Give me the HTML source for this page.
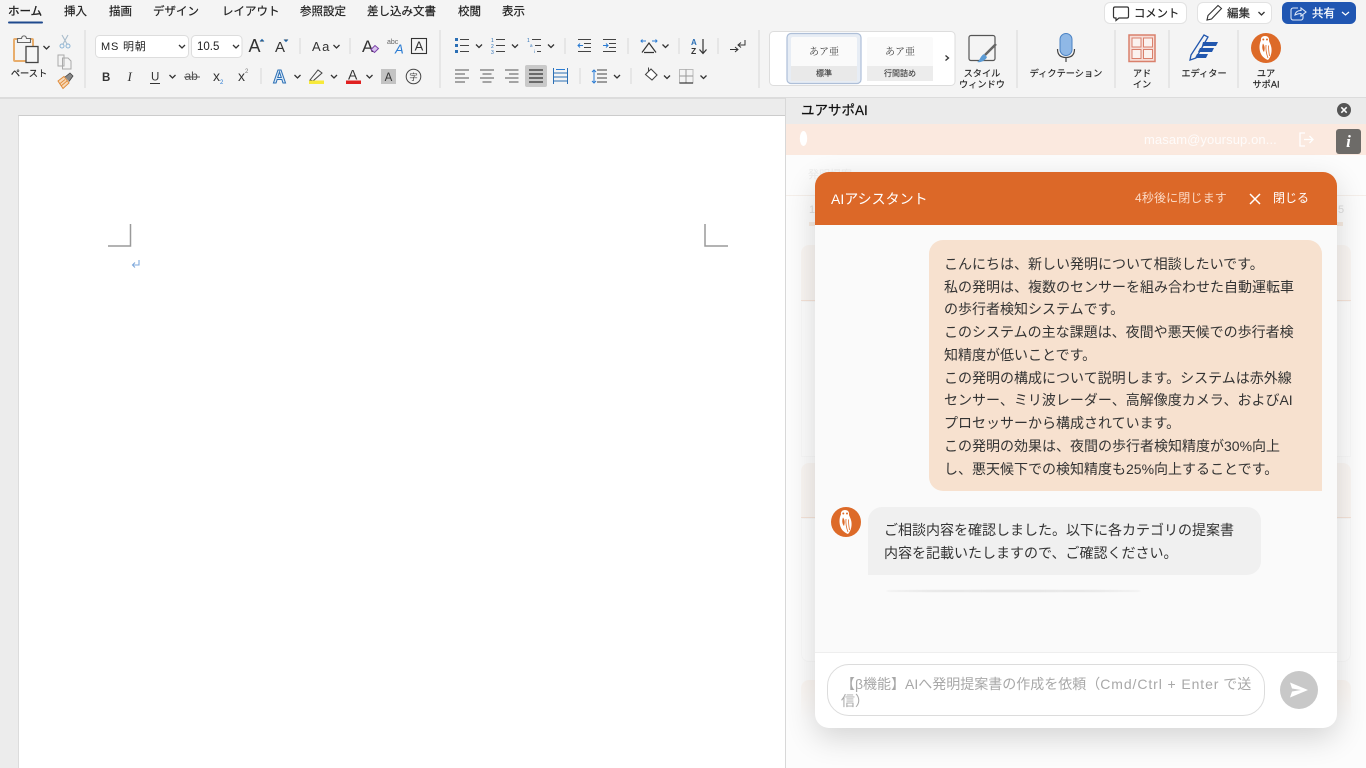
<!DOCTYPE html>
<html lang="ja"><head><meta charset="utf-8"><title>Word</title>
<style>
html,body{margin:0;padding:0;width:1366px;height:768px;overflow:hidden;background:#ececec;font-family:"Liberation Sans","Noto Sans CJK JP",sans-serif;color:#222}
.a{position:absolute}
svg text{font-family:"Liberation Sans","Noto Sans CJK JP",sans-serif}
.t{white-space:nowrap}
.line{position:absolute;white-space:nowrap;font-size:14px;line-height:20px;color:#333}
</style></head><body>
<div class="a" style="left:0;top:0;width:1366px;height:97px;background:#f4f4f4;border-bottom:2px solid #dcdcdc"></div>
<!-- document -->
<div class="a" style="left:18px;top:115px;width:768px;height:653px;background:#fff;border-top:1.5px solid #ccc;border-left:1px solid #dcdcdc;box-sizing:border-box"></div>
<svg class="a" style="left:0;top:0" width="1366" height="768" viewBox="0 0 1366 768" fill="none">
<defs>
<path id="c" d="M-3 -1.5L0 1.5L3 -1.5" stroke="#333" stroke-width="1.3" fill="none"/>
<g id="owl">
<path d="M-1 -12C-4 -12 -5.500 -10 -5 -7.500C-7 -4 -7 2 -5 6C-3.500 9 -.5 11 2 12C5 9 6.500 3 5 -2C4.500 -4 3.500 -5.500 3 -7C3.500 -10 2 -12 -1 -12Z" fill="#fff"/>
<path d="M-3 -4.500C-4.500 -1 -3.500 2.500 -2 4C-1 1 -1 -2 -3 -4.500Z" fill="#dd6a28"/>
<path d="M0 -3C-.5 2 .5 6 2 10M2.500 -2.500C2.500 2 3 5 3.500 8" stroke="#dd6a28" stroke-width=".8"/>
<circle cx="-2.700" cy="-8.500" r="1" fill="#dd6a28"/><circle cx="1" cy="-8.500" r="1" fill="#dd6a28"/>
</g>
</defs>
<!-- doc crop marks -->
<path d="M108 246H130.500V224" stroke="#9a9a9a" stroke-width="1.500"/>
<path d="M705 224V246H728" stroke="#9a9a9a" stroke-width="1.500"/>
<path d="M139 260V265H132.500M135 262.500L132.500 265L135 267.500" stroke="#7fa9dc" stroke-width="1.100"/>

<!-- tabs -->
<g font-size="11.500" fill="#222" stroke="#222" stroke-width=".2">
<text x="8" y="15" stroke-width=".35">ホーム</text><text x="64" y="15">挿入</text><text x="109" y="15">描画</text><text x="153" y="15">デザイン</text><text x="222" y="15">レイアウト</text><text x="300" y="15">参照設定</text><text x="367" y="15">差し込み文書</text><text x="458" y="15">校閲</text><text x="502" y="15">表示</text>
</g>
<rect x="8" y="21.500" width="35" height="2" rx="1" fill="#1f4a8e"/>

<!-- separators -->
<g stroke="#dcdcdc" stroke-width="1.200">
<path d="M85 30V88M440 30V88M759 30V88M1017 30V88M1115 30V88M1169 30V88M1238 30V88"/>
<path d="M300 38V54M350 38V54M261 68V84M565 38V54M628 38V54M679 38V54M718 38V54M580 68V84M631 68V84"/>
</g>

<!-- paste -->
<rect x="14" y="39" width="19" height="22" rx="1" stroke="#e8ad6c" stroke-width="2"/>
<path d="M17.500 42.500V38.500H21.500C22 35 26 35 26.500 38.500H30.500V42.500Z" fill="#f4f4f4" stroke="#666" stroke-width="1.100"/>
<rect x="26" y="46.500" width="12" height="16" fill="#f6f6f6" stroke="#444" stroke-width="1.300"/>
<use href="#c" x="46.500" y="47.500"/>
<text x="29" y="76.500" text-anchor="middle" font-size="9.200" fill="#222" stroke="#222" stroke-width=".2">ペースト</text>
<path d="M62 35L67 44M68 35L63 44" stroke="#a9bccb" stroke-width="1.100"/><circle cx="62" cy="46" r="2" stroke="#8db4d4"/><circle cx="68" cy="46" r="2" stroke="#8db4d4"/>
<path d="M58 55H64V66H58ZM62.500 58H68L71 61V69H62.500Z" fill="#f4f4f4" stroke="#aaa" stroke-width="1"/>
<path d="M58 81L64 76.500L69 83L63 88.500Z" fill="#f7d9b8" stroke="#e08c3c"/><path d="M59.500 84L65 79.500M61 86L67 81" stroke="#e08c3c" stroke-width=".9"/><path d="M65 77L70 73L73 76L69 81.500" fill="#888" stroke="#444" stroke-width=".8"/>

<!-- font boxes -->
<rect x="95.500" y="35.500" width="93" height="22" rx="4" fill="#fff" stroke="#ddd"/>
<rect x="191.500" y="35.500" width="50.500" height="22" rx="4" fill="#fff" stroke="#ddd"/>
<text x="101" y="50" font-size="11" fill="#222" letter-spacing=".8">MS 明朝</text>
<text x="197" y="50" font-size="11.500" fill="#222">10.5</text>
<use href="#c" x="182" y="46.500"/><use href="#c" x="236" y="46.500"/>

<g fill="#333">
<text x="248.500" y="52" font-size="18">A</text><path d="M260 41.500L262 39.500L264 41.500" stroke="#2a72b5"/>
<text x="275" y="52" font-size="15">A</text><path d="M284 39.500L286 41.500L288 39.500" stroke="#2a72b5"/>
<text x="312" y="51" font-size="13" letter-spacing="1.500">Aa</text>
<text x="362" y="52" font-size="17">A</text>
<text x="387" y="44" font-size="7" fill="#666">abc</text><text x="395" y="53.500" font-size="13" fill="#2b7cd3" font-style="italic">A</text>
</g>
<use href="#c" x="336.500" y="46.500"/>
<path d="M371 49.500L375 45.500L378.500 48.500L374.500 52.500Z" fill="#d8c4ee" stroke="#7a3fa8"/>
<rect x="411.500" y="38.500" width="15" height="15" stroke="#333" stroke-width="1.100"/>
<text x="419" y="50.500" text-anchor="middle" font-size="13" fill="#333">A</text>

<!-- row 2 left -->
<g fill="#333">
<text x="102" y="81" font-size="11.500" font-weight="bold">B</text>
<text x="127.500" y="81" font-size="13" font-style="italic" style="font-family:'Liberation Serif',serif">I</text>
<text x="151" y="80.500" font-size="11.500">U</text><path d="M150 83.500H160" stroke="#333"/>
<text x="184.500" y="80" font-size="12" fill="#555">ab</text><path d="M184 77H200" stroke="#555"/>
<text x="213" y="81" font-size="14">x</text><text x="220" y="84" font-size="6" fill="#2b7cd3">2</text>
<text x="238" y="81" font-size="14">x</text><text x="245" y="73" font-size="6" fill="#777">2</text>
</g>
<text x="273" y="83" font-size="18" font-weight="bold" fill="#d7e7f7" stroke="#2b6fb5" stroke-width="1">A</text>
<path d="M310 80L318 70L322 73L313 81Z" stroke="#444" fill="#f4f4f4"/>
<rect x="309" y="80.500" width="15" height="3.500" fill="#f7e93a"/>
<text x="348" y="79.500" font-size="14" fill="#333">A</text><rect x="346" y="80.500" width="15" height="3.500" fill="#e02020"/>
<rect x="381" y="69" width="15" height="15" fill="#c3c3c3"/><text x="388.500" y="81" text-anchor="middle" font-size="11.500" fill="#333">A</text>
<circle cx="413.500" cy="76.500" r="7.300" stroke="#444" stroke-width="1"/><text x="413.500" y="80" text-anchor="middle" font-size="8.500" fill="#444">字</text>
<use href="#c" x="172.500" y="76.500"/><use href="#c" x="297.500" y="76.500"/><use href="#c" x="334" y="76.500"/><use href="#c" x="369.500" y="76.500"/>

<!-- list icons -->
<g fill="#2b6fb5">
<rect x="455" y="38" width="3" height="3"/><rect x="455" y="44" width="3" height="3"/><rect x="455" y="50" width="3" height="3"/>
<text x="491" y="42" font-size="5">1</text><text x="491" y="48" font-size="5">2</text><text x="491" y="54" font-size="5">3</text>
<text x="527" y="42" font-size="5">1</text><text x="530" y="47" font-size="4.500">a</text><text x="534" y="53" font-size="4.500">i</text>
</g>
<path d="M460 39.500H469M460 45.500H469M460 51.500H469M496 39.500H505M496 45.500H505M496 51.500H505M532 39.500H541M535 45.500H541M537 51.500H541M578 39.500H591M584 43.500H591M584 47.500H591M578 51.500H591M603 39.500H616M609 43.500H616M609 47.500H616M603 51.500H616" stroke="#444" stroke-width="1.100"/>
<path d="M578 45.500H583M580 43.500L578 45.500L580 47.500M603 45.500H608M606 43.500L608 45.500L606 47.500" stroke="#2b7cd3" stroke-width="1"/>
<use href="#c" x="479" y="46"/><use href="#c" x="515" y="46"/><use href="#c" x="551" y="46"/><use href="#c" x="665.500" y="46"/>
<path d="M642 52.500L649 43L656 52.500M644 52.500H654" stroke="#333" stroke-width="1.200"/>
<path d="M641 41H646M652 41H657M642.500 39.500L641 41L642.500 42.500M655.500 39.500L657 41L655.500 42.500" stroke="#2b7cd3"/>
<text x="691" y="45" font-size="8" fill="#2b6fb5" font-weight="bold">A</text><text x="691" y="54" font-size="8.500" fill="#333" font-weight="bold">Z</text>
<path d="M703 39V53M699.500 49.500L703 53.500L706.500 49.500" stroke="#333" stroke-width="1.200"/>
<path d="M730 49.500H738M735 47L738 49.500L735 52" stroke="#333"/>
<path d="M745 40V45H738M741 42.500L738 45L741 47.500" stroke="#333"/>

<!-- align row -->
<rect x="525" y="65" width="22" height="22" rx="2" fill="#c9c9c9"/>
<path d="M455 70H469M455 74H465M455 78H469M455 82H465M480 70H494M482.500 74H491.500M480 78H494M482.500 82H491.500M505 70H518.500M509 74H518.500M505 78H518.500M509 82H518.500" stroke="#555" stroke-width="1.100"/>
<path d="M529 70H543M529 74H543M529 78H543M529 82H543" stroke="#333" stroke-width="1.200"/>
<path d="M553.500 68V84M567.500 68V84M554 73H567M554 77H567M554 81H567" stroke="#2b6fb5" stroke-width="1"/><path d="M556 69.500H565" stroke="#2b7cd3"/>
<path d="M597 70H607M597 74H607M597 78H607M597 82H607" stroke="#444" stroke-width="1.100"/>
<path d="M594 70V83M592 72L594 70L596 72M592 81L594 83L596 81" stroke="#2b7cd3" stroke-width="1"/>
<use href="#c" x="617" y="76.500"/><use href="#c" x="667" y="77"/><use href="#c" x="703.500" y="77"/>
<path d="M645.500 74.500L651 69L657 75L652 80Z" fill="#fff" stroke="#444" stroke-width="1.100"/><path d="M648.500 71V67.500" stroke="#444"/>
<rect x="679.500" y="69.500" width="13.500" height="13.500" stroke="#bbb"/><path d="M686 69.500V83M679.500 76H693" stroke="#999"/><path d="M679.500 83H693" stroke="#333" stroke-width="1.200"/>

<!-- style gallery -->
<rect x="769.500" y="31.500" width="185.500" height="54" rx="4" fill="#fff" stroke="#ddd"/>
<rect x="787" y="33.500" width="74" height="50" rx="4" fill="#e7edf5" stroke="#aebfd8" stroke-width="1.200"/>
<rect x="791" y="37" width="66" height="44" rx="2" fill="#fafafa"/>
<rect x="791" y="66" width="66" height="15" fill="#e9e9e9"/>
<rect x="867" y="37" width="66" height="44" rx="2" fill="#fafafa"/>
<rect x="867" y="66" width="66" height="15" fill="#ececec"/>
<g text-anchor="middle" fill="#444">
<text x="824" y="55" font-size="10" style="font-family:'Noto Serif CJK SC',serif">あア亜</text><text x="900" y="55" font-size="10" style="font-family:'Noto Serif CJK SC',serif">あア亜</text>
<text x="824" y="76" font-size="8" stroke="#444" stroke-width=".15">標準</text><text x="900" y="76" font-size="8" stroke="#444" stroke-width=".15">行間詰め</text>
</g>
<path d="M945.500 55.500L948.500 58L945.500 60.500" stroke="#333" stroke-width="1.300"/>
<rect x="969" y="35.500" width="26" height="25" rx="2" stroke="#555" stroke-width="1.200" fill="#f4f4f4"/>
<path d="M985 55L996 44" stroke="#666" stroke-width="2.500"/>
<path d="M977 62C980 61 980 56 984 54L987 57C986 60 981 63 977 62Z" fill="#5b9bd5"/>
<g text-anchor="middle" font-size="9.200" fill="#222" stroke="#222" stroke-width=".15">
<text x="982" y="76.500">スタイル</text><text x="982" y="87.500">ウィンドウ</text>
<text x="1066" y="76.500">ディクテーション</text>
<text x="1142" y="76.500">アド</text><text x="1142" y="87.500">イン</text>
<text x="1204" y="76.500">エディター</text>
<text x="1266" y="76.500">ユア</text><text x="1266" y="87.500">サポAI</text>
</g>
<!-- mic -->
<rect x="1060" y="33.500" width="12" height="22" rx="6" fill="#8fb8e6" stroke="#4a82c4"/>
<path d="M1057.500 49C1057.500 56 1062 57.500 1066 57.500C1070 57.500 1074.500 56 1074.500 49M1066 57.500V62" stroke="#444" stroke-width="1.200"/>
<!-- addin -->
<rect x="1129" y="35" width="26" height="26.500" fill="#f6ddd7" stroke="#d9806c" stroke-width="1.500"/>
<rect x="1132" y="38" width="9" height="9" fill="#fbf2ef" stroke="#d9806c"/><rect x="1143.500" y="38" width="9" height="9" fill="#fbf2ef" stroke="#d9806c"/><rect x="1132" y="49.500" width="9" height="9" fill="#fbf2ef" stroke="#d9806c"/><rect x="1143.500" y="49.500" width="9" height="9" fill="#fbf2ef" stroke="#d9806c"/>
<!-- editor -->
<path d="M1190 60L1191 55L1204 35L1208 37L1196 58Z" fill="#f4f4f4" stroke="#2257ae" stroke-width="1.300"/>
<path d="M1203 42H1218L1216 46H1202ZM1200 48H1214L1212 52H1198ZM1197 54H1208L1206 58H1195Z" fill="#2257ae"/>
<!-- owl ribbon -->
<circle cx="1266" cy="48" r="15" fill="#dd6a28"/><use href="#owl" x="1266" y="48"/>
</svg>

<!-- top right buttons -->
<div class="a" style="left:1104px;top:2px;width:83px;height:22px;background:#fff;border:1px solid #e2e2e2;border-radius:6px;box-sizing:border-box"></div>
<div class="a" style="left:1197px;top:2px;width:75px;height:22px;background:#fff;border:1px solid #e2e2e2;border-radius:6px;box-sizing:border-box"></div>
<div class="a" style="left:1282px;top:2px;width:74px;height:22px;background:#2056b2;border-radius:6px"></div>
<svg class="a" style="left:1100px;top:0" width="266" height="28" viewBox="1100 0 266 28" fill="none">
<path d="M1115 7H1127C1128 7 1128.500 7.500 1128.500 8.500V16.500C1128.500 17.500 1128 18 1127 18H1119L1116 20.500V18H1115C1114 18 1113.500 17.500 1113.500 16.500V8.500C1113.500 7.500 1114 7 1115 7Z" stroke="#333" stroke-width="1.200"/>
<text x="1134" y="17" font-size="11.300" fill="#222" stroke="#222" stroke-width=".2">コメント</text>
<path d="M1207 20L1208 15.500L1218 5.500L1221.500 8.500L1211.500 19Z" stroke="#333" stroke-width="1.100"/>
<text x="1227" y="17" font-size="11.500" fill="#333" stroke="#333" stroke-width=".25">編集</text>
<use href="#c" x="1261.500" y="13.500"/>
<path d="M1298 8H1293C1292 8 1291 9 1291 10V18C1291 19 1292 20 1293 20H1301C1302 20 1303 19 1303 18V15" stroke="#dfe8f7" stroke-width="1.100"/>
<path d="M1295 15C1295.500 12 1298 10.500 1301 10.500V8L1306 12L1301 16V13.500C1299 13.500 1297 14 1295 15Z" stroke="#dfe8f7" stroke-width="1.100"/>
<text x="1312" y="17" font-size="11.500" fill="#fff" stroke="#fff" stroke-width=".25">共有</text>
<path d="M1342 12L1345.500 15L1349 12" stroke="#fff" stroke-width="1.200"/>
</svg>

<!-- task pane -->
<div class="a" style="left:785px;top:98px;width:581px;height:670px;background:#fcfcfc;border-left:1.500px solid #d8d8d8;box-sizing:border-box"></div>
<div class="a" style="left:786px;top:98px;width:580px;height:26px;background:#ebebeb"></div>
<div class="a t" style="left:801px;top:102px;font-size:13.500px;line-height:18px;color:#111;-webkit-text-stroke:.25px #111">ユアサポAI</div>
<svg class="a" style="left:1336px;top:102px" width="16" height="16" viewBox="0 0 16 16"><circle cx="8" cy="8" r="7" fill="#555"/><path d="M5.300 5.300L10.700 10.700M10.700 5.300L5.300 10.700" stroke="#fff" stroke-width="1.500"/></svg>
<div class="a" style="left:786px;top:124px;width:580px;height:31px;background:#fbe9df"></div>
<svg class="a" style="left:798px;top:130px" width="12" height="18" viewBox="0 0 12 18"><ellipse cx="5.500" cy="8.500" rx="3.700" ry="7.500" fill="#fff"/></svg>
<div class="a t" style="left:1144px;top:131px;font-size:13px;line-height:18px;color:#fff;opacity:.85;letter-spacing:.1px">masam@yoursup.on...</div>
<svg class="a" style="left:1298px;top:131px" width="17" height="17" viewBox="0 0 17 17" fill="none" stroke="#fff" stroke-width="1.300"><path d="M7 2H2V15H7M6 8.500H15M11.500 5L15 8.500L11.500 12"/></svg>
<div class="a" style="left:1336px;top:129px;width:25px;height:25px;background:#6d6b68;border-radius:3px;color:#fff;font:italic bold 17px/25px 'Liberation Serif',serif;text-align:center">i</div>

<!-- faint background content -->
<div class="a" style="left:786px;top:195px;width:580px;height:1px;background:#f5efea"></div>
<div class="a t" style="left:808px;top:166px;font-size:11px;line-height:18px;color:#eee">発明提案</div>
<div class="a t" style="left:809px;top:203px;font-size:11px;line-height:14px;color:#ddd">1</div>
<div class="a t" style="left:1338px;top:203px;font-size:11px;line-height:14px;color:#ddd">5</div>
<div class="a" style="left:809px;top:222px;width:534px;height:4px;background:#f6eae1"></div>
<div class="a" style="left:801px;top:245px;width:550px;height:55px;background:#faf6f3;border-bottom:1px solid #f5e3d8;border-radius:8px 8px 0 0"></div>
<div class="a" style="left:801px;top:301px;width:550px;height:156px;background:#fdfdfd;border:1px solid #f8f8f8;box-sizing:border-box"></div>
<div class="a" style="left:801px;top:463px;width:550px;height:54px;background:#faf6f3;border-bottom:1px solid #f5e3d8;border-radius:8px 8px 0 0"></div>
<div class="a" style="left:801px;top:518px;width:550px;height:144px;background:#fdfdfd;border:1px solid #f8f8f8;box-sizing:border-box;border-radius:0 0 8px 8px"></div>
<div class="a" style="left:801px;top:680px;width:550px;height:40px;background:linear-gradient(#fbf6f2,#fcfcfc);border-radius:8px 8px 0 0"></div>

<!-- modal -->
<div class="a" style="left:815px;top:172px;width:522px;height:556px;background:#fff;border-radius:14px;box-shadow:0 10px 30px rgba(0,0,0,.16);overflow:hidden">
  <div class="a" style="left:0;top:0;width:522px;height:53px;background:#dc6828"></div>
  <div class="a" style="left:0;top:53px;width:522px;height:427px;background:#fafafa;border-bottom:1px solid #eee"></div>
</div>
<div class="a t" style="left:831px;top:189px;font-size:14px;line-height:20px;color:#fff">AIアシスタント</div>
<div class="a t" style="left:1135px;top:190px;font-size:12px;line-height:17px;color:#fbd9c4;letter-spacing:.15px">4秒後に閉じます</div>
<svg class="a" style="left:1248px;top:192px" width="14" height="14" viewBox="0 0 14 14"><path d="M2 2L12 12M12 2L2 12" stroke="#fff" stroke-width="1.500"/></svg>
<div class="a t" style="left:1273px;top:190px;font-size:12px;line-height:17px;color:#fff">閉じる</div>

<div class="a" style="left:929px;top:240px;width:393px;height:251px;background:#f7e1cf;border-radius:14px 14px 0 14px"></div>
<div class="line" style="left:944px;top:254px">こんにちは、新しい発明について相談したいです。</div>
<div class="line" style="left:944px;top:277px">私の発明は、複数のセンサーを組み合わせた自動運転車</div>
<div class="line" style="left:944px;top:299px">の歩行者検知システムです。</div>
<div class="line" style="left:944px;top:322px">このシステムの主な課題は、夜間や悪天候での歩行者検</div>
<div class="line" style="left:944px;top:345px">知精度が低いことです。</div>
<div class="line" style="left:944px;top:368px">この発明の構成について説明します。システムは赤外線</div>
<div class="line" style="left:944px;top:390px">センサー、ミリ波レーダー、高解像度カメラ、およびAI</div>
<div class="line" style="left:944px;top:413px">プロセッサーから構成されています。</div>
<div class="line" style="left:944px;top:436px">この発明の効果は、夜間の歩行者検知精度が30%向上</div>
<div class="line" style="left:944px;top:459px">し、悪天候下での検知精度も25%向上することです。</div>

<svg class="a" style="left:830px;top:506px" width="32" height="32" viewBox="-16 -16 32 32"><circle cx="0" cy="0" r="15" fill="#dd6a28"/><path d="M-1 -12C-4 -12 -5.500 -10 -5 -7.500C-7 -4 -7 2 -5 6C-3.500 9 -.5 11 2 12C5 9 6.500 3 5 -2C4.500 -4 3.500 -5.500 3 -7C3.500 -10 2 -12 -1 -12Z" fill="#fff"/><path d="M-3 -4.500C-4.500 -1 -3.500 2.500 -2 4C-1 1 -1 -2 -3 -4.500Z" fill="#dd6a28"/><path d="M0 -3C-.5 2 .5 6 2 10M2.500 -2.500C2.500 2 3 5 3.500 8" stroke="#dd6a28" stroke-width=".8" fill="none"/><circle cx="-2.700" cy="-8.500" r="1" fill="#dd6a28"/><circle cx="1" cy="-8.500" r="1" fill="#dd6a28"/></svg>
<div class="a" style="left:868px;top:507px;width:393px;height:68px;background:#f0f0f0;border-radius:14px 14px 14px 0"></div>
<div class="line" style="left:884px;top:520px">ご相談内容を確認しました。以下に各カテゴリの提案書</div>
<div class="line" style="left:884px;top:543px">内容を記載いたしますので、ご確認ください。</div>
<div class="a" style="left:886px;top:590px;width:255px;height:2px;background:#e2e2e2;border-radius:50%;filter:blur(.6px)"></div>

<div class="a" style="left:827px;top:664px;width:438px;height:52px;background:#fff;border:1px solid #dcdcdc;border-radius:22px;box-sizing:border-box"></div>
<div class="a t" style="left:841px;top:676px;font-size:14px;line-height:17px;color:#a8a8a8">【β機能】AIへ発明提案書の作成を依頼（<span style="letter-spacing:.9px">Cmd/Ctrl + Enter</span> で送<br>信）</div>
<svg class="a" style="left:1280px;top:671px" width="38" height="38" viewBox="0 0 38 38"><circle cx="19" cy="19" r="19" fill="#c8c8c8"/><path d="M10 11.500L28 19L10 26.500L12 20.500L21 19L12 17.500Z" fill="#fff"/></svg>
</body></html>
